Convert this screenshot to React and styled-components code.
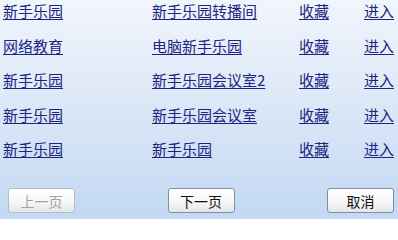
import React from "react";
import styled, { createGlobalStyle } from "styled-components";

const Global = createGlobalStyle`
  html, body {
    margin: 0;
    padding: 0;
  }
  body {
    width: 398px;
    height: 219px;
    overflow: hidden;
    font-family: "Noto Sans CJK SC", "DejaVu Sans", sans-serif;
  }
`;

const Panel = styled.div`
  width: 398px;
  height: 219px;
  box-sizing: border-box;
  padding: 0 4px 0 3px;
  background: linear-gradient(180deg, #f1f5fc 0%, #dde8f7 45%, #c3d8f3 100%);
  display: flex;
  flex-direction: column;
`;

const List = styled.div`
  display: grid;
  grid-template-columns: 149px 147px 65px auto;
  grid-auto-rows: 22px;
  row-gap: 12.5px;
`;

const Cell = styled.div`
  font-size: 15px;
  line-height: 22px;
  height: 22px;
`;

const Link = styled.a`
  color: #1c2580;
  text-decoration: underline;
  text-underline-offset: 2px;
  cursor: pointer;
  white-space: nowrap;
`;

const Footer = styled.div`
  margin-top: 28px;
  display: flex;
  justify-content: space-between;
  align-items: center;
  padding-left: 5px;
`;

const Button = styled.button`
  width: 67px;
  height: 25px;
  box-sizing: border-box;
  border: 1px solid ${(p) => (p.disabled ? "#b4bcc6" : "#7f8ea3")};
  border-radius: 3px;
  background: linear-gradient(180deg, #ffffff 0%, #f6f7f8 55%, #e3e6ea 100%);
  font-family: inherit;
  font-size: 14px;
  line-height: 1;
  color: ${(p) => (p.disabled ? "#a3a3a3" : "#111")};
  padding: 0;
`;

const rows = [
  ["新手乐园", "新手乐园转播间"],
  ["网络教育", "电脑新手乐园"],
  ["新手乐园", "新手乐园会议室2"],
  ["新手乐园", "新手乐园会议室"],
  ["新手乐园", "新手乐园"],
];

export default function App() {
  return (
    <>
      <Global />
      <Panel>
        <List>
          {rows.map(([a, b], i) => (
            <React.Fragment key={i}>
              <Cell><Link>{a}</Link></Cell>
              <Cell><Link>{b}</Link></Cell>
              <Cell><Link>收藏</Link></Cell>
              <Cell><Link>进入</Link></Cell>
            </React.Fragment>
          ))}
        </List>
        <Footer>
          <Button disabled>上一页</Button>
          <Button>下一页</Button>
          <Button>取消</Button>
        </Footer>
      </Panel>
    </>
  );
}
